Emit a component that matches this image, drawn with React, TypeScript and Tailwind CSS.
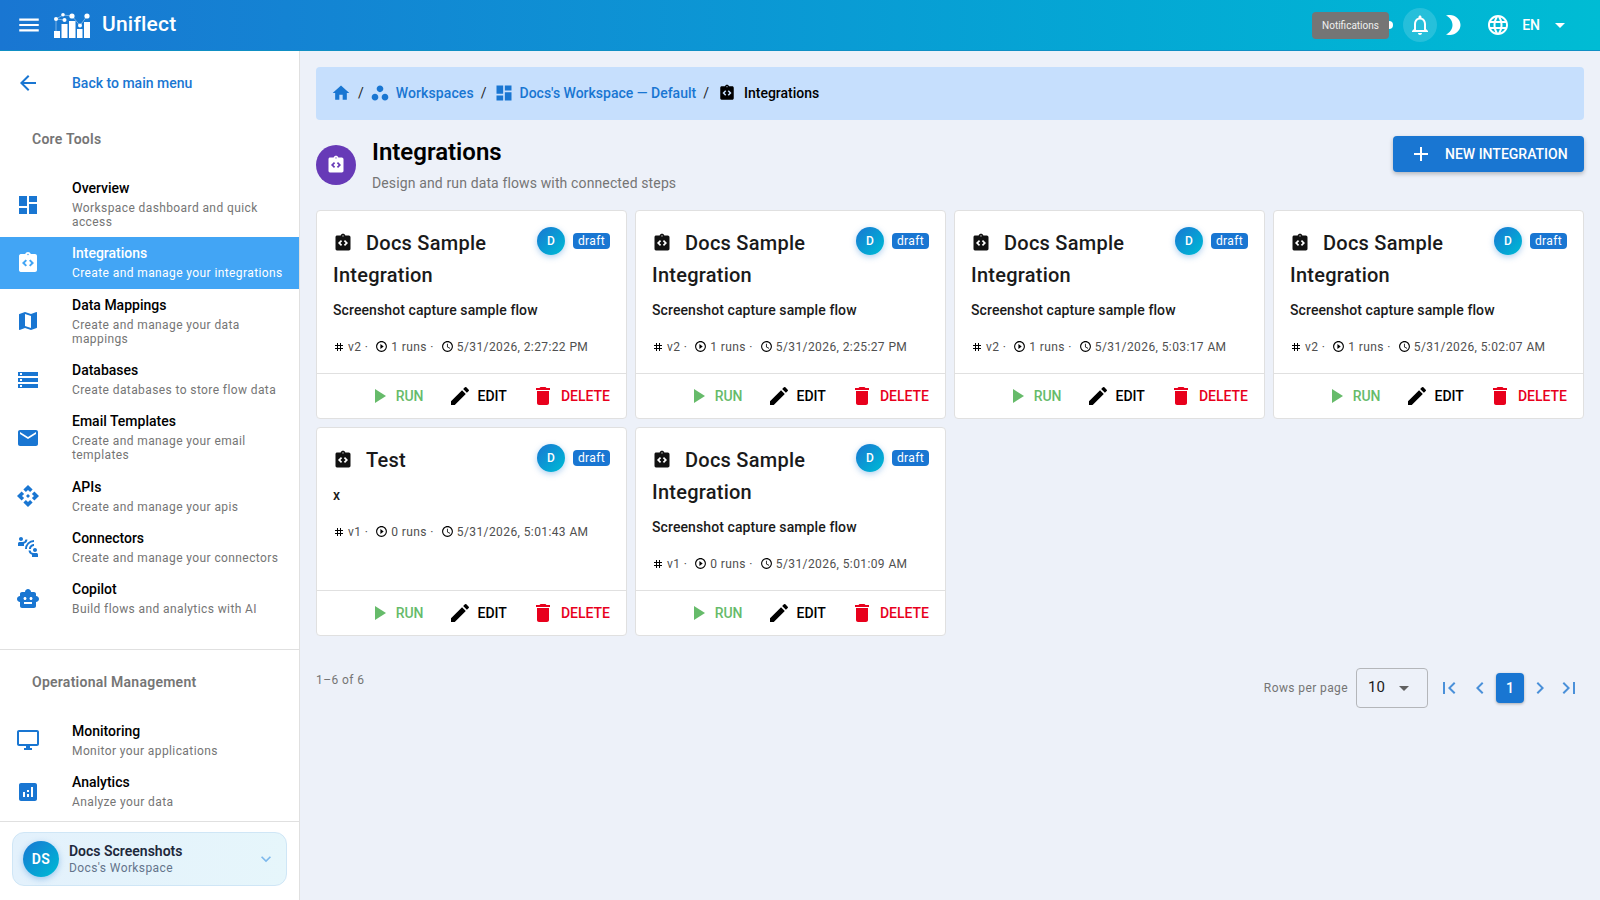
import type { ComponentType } from 'react';
import {
  MdAccessTime,
  MdAdd,
  MdAnalytics,
  MdApi,
  MdArrowBack,
  MdArrowDropDown,
  MdChevronLeft,
  MdChevronRight,
  MdConnectWithoutContact,
  MdDashboard,
  MdDelete,
  MdEdit,
  MdEmail,
  MdExpandMore,
  MdFirstPage,
  MdHome,
  MdIntegrationInstructions,
  MdLanguage,
  MdLastPage,
  MdMap,
  MdMenu,
  MdNotificationsNone,
  MdOutlineDesktopWindows,
  MdPlayArrow,
  MdPlayCircleOutline,
  MdSmartToy,
  MdStorage,
  MdTag,
  MdWorkspaces,
} from 'react-icons/md';

type IconType = ComponentType<{ size?: number; className?: string }>;

type NavItem = {
  icon: IconType;
  title: string;
  desc: string;
  active?: boolean;
};

type Integration = {
  title: string;
  desc: string;
  version: string;
  runs: number;
  date: string;
};

const coreTools: NavItem[] = [
  { icon: MdDashboard, title: 'Overview', desc: 'Workspace dashboard and quick access' },
  { icon: MdIntegrationInstructions, title: 'Integrations', desc: 'Create and manage your integrations', active: true },
  { icon: MdMap, title: 'Data Mappings', desc: 'Create and manage your data mappings' },
  { icon: MdStorage, title: 'Databases', desc: 'Create databases to store flow data' },
  { icon: MdEmail, title: 'Email Templates', desc: 'Create and manage your email templates' },
  { icon: MdApi, title: 'APIs', desc: 'Create and manage your apis' },
  { icon: MdConnectWithoutContact, title: 'Connectors', desc: 'Create and manage your connectors' },
  { icon: MdSmartToy, title: 'Copilot', desc: 'Build flows and analytics with AI' },
];

const operational: NavItem[] = [
  { icon: MdOutlineDesktopWindows, title: 'Monitoring', desc: 'Monitor your applications' },
  { icon: MdAnalytics, title: 'Analytics', desc: 'Analyze your data' },
];

const integrations: Integration[] = [
  { title: 'Docs Sample Integration', desc: 'Screenshot capture sample flow', version: 'v2', runs: 1, date: '5/31/2026, 2:27:22 PM' },
  { title: 'Docs Sample Integration', desc: 'Screenshot capture sample flow', version: 'v2', runs: 1, date: '5/31/2026, 2:25:27 PM' },
  { title: 'Docs Sample Integration', desc: 'Screenshot capture sample flow', version: 'v2', runs: 1, date: '5/31/2026, 5:03:17 AM' },
  { title: 'Docs Sample Integration', desc: 'Screenshot capture sample flow', version: 'v2', runs: 1, date: '5/31/2026, 5:02:07 AM' },
  { title: 'Test', desc: 'x', version: 'v1', runs: 0, date: '5/31/2026, 5:01:43 AM' },
  { title: 'Docs Sample Integration', desc: 'Screenshot capture sample flow', version: 'v1', runs: 0, date: '5/31/2026, 5:01:09 AM' },
];

function Logo() {
  return (
    <svg width="36" height="25" viewBox="0 0 36 25" fill="none">
      <g fill="#fff">
        <rect x="0" y="18" width="6" height="7" />
        <rect x="7.5" y="11" width="6" height="14" />
        <rect x="15" y="8" width="6.5" height="17" />
        <rect x="23" y="16" width="5.5" height="9" />
        <rect x="30" y="9" width="6" height="16" />
        <circle cx="2" cy="6" r="2" />
        <circle cx="10.5" cy="7" r="2" />
        <circle cx="18" cy="3" r="2.6" />
        <circle cx="9" cy="1.8" r="1.8" />
        <circle cx="26" cy="12.5" r="2" />
        <circle cx="33" cy="3" r="2.6" />
      </g>
      <path d="M2 6L9 2M2 6L10.5 7M2 6V18M9 2L18 3M26 12.5L18 3M26 12.5L33 3" stroke="#fff" strokeWidth="0.6" opacity="0.7" />
    </svg>
  );
}

function MoonIcon() {
  return (
    <svg width="24" height="24" viewBox="0 0 24 24" fill="#fff">
      <path d="M6 2.5C10 4.5 12.5 8 12.5 12C12.5 16 10 19.5 6 21.5C7.5 21.9 9 22 10 22C15.5 22 20.5 17.5 20.5 12C20.5 6.5 15.5 2 10 2C9 2 7.5 2.1 6 2.5Z" />
    </svg>
  );
}

function SidebarItem({ item }: { item: NavItem }) {
  const Icon = item.icon;
  return (
    <div className={`flex items-center px-4 pt-[6px] pb-[8px] ${item.active ? 'bg-[#42a5f5]' : ''}`}>
      <div className="w-[56px] shrink-0 pt-[2px]">
        <Icon size={24} className={item.active ? 'text-white' : 'text-[#1976d2]'} />
      </div>
      <div className="min-w-0">
        <div className={`text-sm leading-5 font-medium ${item.active ? 'text-white' : 'text-black'}`}>{item.title}</div>
        <div className={`mt-[3px] text-xs leading-[14.2px] tracking-[0.4px] ${item.active ? 'text-white' : 'text-[#757575]'}`}>
          {item.desc}
        </div>
      </div>
    </div>
  );
}

function Sidebar() {
  return (
    <aside className="flex w-[300px] shrink-0 flex-col border-r border-[#e0e0e0] bg-white">
      <div className="flex h-16 items-center px-4">
        <div className="w-[56px] shrink-0">
          <MdArrowBack size={24} className="text-[#1976d2]" />
        </div>
        <span className="text-sm font-medium text-[#1976d2]">Back to main menu</span>
      </div>
      <div className="mb-[9px] flex h-12 items-center px-8 text-sm font-semibold tracking-[0.25px] text-[#757575]">Core Tools</div>
      <div>
        {coreTools.map((item) => (
          <SidebarItem key={item.title} item={item} />
        ))}
      </div>
      <div className="mt-[25px] border-t border-[#e0e0e0]" />
      <div className="flex h-[64.5px] items-center pr-8 pb-[1.5px] pl-8 text-sm font-semibold tracking-[0.25px] text-[#757575]">Operational Management</div>
      <div>
        {operational.map((item) => (
          <SidebarItem key={item.title} item={item} />
        ))}
      </div>
      <div className="mt-[3.5px] flex-1 border-t border-[#e0e0e0] px-3 pt-[10px]">
        <div className="flex h-[54px] items-center rounded-xl border border-[#cfe6f6] bg-gradient-to-r from-[#e3f1fc] to-[#e6f6fb] pr-[10px] pl-[10px]">
          <div className="flex h-9 w-9 items-center justify-center rounded-full bg-gradient-to-br from-[#1976d2] to-[#00bcd4] text-sm font-semibold tracking-[0.4px] text-white shadow-[0_2px_6px_rgba(25,118,210,0.35)]">
            DS
          </div>
          <div className="ml-[10px] flex-1">
            <div className="text-sm leading-[18px] font-semibold text-[#1e293b]">Docs Screenshots</div>
            <div className="text-xs leading-4 tracking-[0.4px] text-[#64748b]">Docs's Workspace</div>
          </div>
          <MdExpandMore size={20} className="text-[#7db8ec]" />
        </div>
      </div>
    </aside>
  );
}

function TopBar() {
  return (
    <header className="relative flex h-[51px] shrink-0 items-center border-b border-[#0f8fc4] bg-gradient-to-r from-[#1976d2] to-[#00bcd4] pr-[28px] pl-4 text-white">
      <MdMenu size={26} />
      <div className="ml-[12px]">
        <Logo />
      </div>
      <span className="ml-[12px] text-[21px] font-medium tracking-[0.2px]">Uniflect</span>
      <div className="ml-auto flex items-center">
        <div className="mr-[10px] h-2 w-1 rounded-r-full bg-white" />
        <div className="flex h-[34px] w-[34px] items-center justify-center rounded-full bg-white/15">
          <MdNotificationsNone size={24} />
        </div>
        <div className="ml-[3px]">
          <MoonIcon />
        </div>
        <MdLanguage size={24} className="ml-[22px]" />
        <span className="ml-[12px] text-sm font-medium">EN</span>
        <MdArrowDropDown size={24} className="ml-[8px]" />
      </div>
      <div className="absolute top-[12px] left-[1312px] flex h-[27px] w-[77px] items-center justify-center rounded bg-[#757575] text-[10px] text-[#f0f0f0]">
        Notifications
      </div>
    </header>
  );
}

function Breadcrumbs() {
  return (
    <nav className="flex h-[53px] items-center rounded bg-[#c6dffd] pr-4 pb-[1px] pl-[15px] text-sm font-medium">
      <MdHome size={20} className="text-[#1976d2]" />
      <span className="mr-[6px] ml-[7px] font-normal text-[#1f1f1f]">/</span>
      <MdWorkspaces size={20} className="text-[#1976d2]" />
      <span className="ml-[6px] tracking-[0.1px] text-[#1976d2]">Workspaces</span>
      <span className="mx-[7px] font-normal text-[#1f1f1f]">/</span>
      <MdDashboard size={20} className="text-[#1976d2]" />
      <span className="ml-[6px] text-[#1976d2]">Docs's Workspace — Default</span>
      <span className="mr-[9px] ml-[7px] font-normal text-[#1f1f1f]">/</span>
      <MdIntegrationInstructions size={18} className="text-black" />
      <span className="ml-[8px] text-black">Integrations</span>
    </nav>
  );
}

function IntegrationCard({ item }: { item: Integration }) {
  return (
    <div className="flex h-[209px] flex-col rounded border border-[#e0e0e0] bg-white">
      <div className="flex-1 px-4 pt-4">
        <div className="flex items-start justify-between">
          <div className="w-[196px] text-xl leading-8 font-medium tracking-[0.25px] text-[#1a1a1a]">
            <MdIntegrationInstructions size={20} className="mr-[13px] -mt-[2px] inline-block text-[#111]" />
            {item.title}
          </div>
          <div className="flex items-center gap-2">
            <div className="flex h-7 w-7 items-center justify-center rounded-full bg-gradient-to-br from-[#1976d2] to-[#00bcd4] text-xs font-medium text-white shadow-[0_2px_6px_rgba(25,118,210,0.35)]">
              D
            </div>
            <span className="flex h-4 w-[37px] items-center justify-center rounded bg-[#1976d2] text-xs tracking-[0.4px] text-white">
              draft
            </span>
          </div>
        </div>
        <div className="mt-[9px] text-sm leading-5 font-medium tracking-[0.1px] text-[#1a1a1a]">{item.desc}</div>
        <div className="mt-[17px] flex items-center text-xs leading-5 tracking-[0.4px] text-[#4f4f4f]">
          <MdTag size={12} className="text-black" />
          <span className="ml-[3px]">{item.version} ·</span>
          <MdPlayCircleOutline size={13} className="ml-[7px] text-black" />
          <span className="ml-[3px]">{item.runs} runs ·</span>
          <MdAccessTime size={13} className="ml-[7px] text-black" />
          <span className="ml-[3px]">{item.date}</span>
        </div>
      </div>
      <div className="flex h-[45px] items-center justify-end border-t border-[#e0e0e0] pr-4 text-sm font-medium">
        <MdPlayArrow size={24} className="text-[#66bb6a]" />
        <span className="ml-[5px] text-[#66bb6a]">RUN</span>
        <MdEdit size={24} className="ml-[24px] text-black" />
        <span className="ml-[6px] text-black">EDIT</span>
        <MdDelete size={24} className="ml-[24px] text-[#e8001c]" />
        <span className="ml-[6px] text-[#e8001c]">DELETE</span>
      </div>
    </div>
  );
}

function Pagination() {
  return (
    <div className="mt-[32px] flex items-start justify-between pr-[3px]">
      <span className="mt-[4px] text-xs leading-4 tracking-[0.4px] text-[#757575]">1–6 of 6</span>
      <div className="flex items-center">
        <span className="text-xs tracking-[0.4px] text-[#757575]">Rows per page</span>
        <div className="ml-2 flex h-10 w-[72px] items-center justify-between rounded border border-[#b4b6ba] pr-[11px] pl-[11px] text-[15px] text-[#1a1a1a]">
          10
          <MdArrowDropDown size={24} className="text-[#616161]" />
        </div>
        <MdFirstPage size={24} className="ml-[9px] text-[#4a90d9]" />
        <MdChevronLeft size={24} className="ml-[7px] text-[#4a90d9]" />
        <div className="ml-[4px] flex h-[30px] w-7 items-center justify-center rounded bg-[#1976d2] text-sm font-medium text-white shadow-[0_1px_3px_rgba(0,0,0,0.3)]">
          1
        </div>
        <MdChevronRight size={24} className="ml-[4px] text-[#4a90d9]" />
        <MdLastPage size={24} className="ml-[5px] text-[#4a90d9]" />
      </div>
    </div>
  );
}

export default function App() {
  return (
    <div className="flex h-screen flex-col overflow-hidden bg-[#edf1f9] font-[Roboto,sans-serif]">
      <TopBar />
      <div className="flex min-h-0 flex-1">
        <Sidebar />
        <main className="min-w-0 flex-1 px-4 pt-4">
          <Breadcrumbs />
          <div className="mt-4 flex items-start justify-between">
            <div className="flex">
              <div className="mt-[9px] flex h-10 w-10 items-center justify-center rounded-full bg-[#673ab7]">
                <MdIntegrationInstructions size={20} className="text-white" />
              </div>
              <div className="ml-[16px]">
                <div className="text-2xl leading-8 font-semibold text-black">Integrations</div>
                <div className="mt-[5px] text-sm leading-5 tracking-[0.13px] text-[#757575]">Design and run data flows with connected steps</div>
              </div>
            </div>
            <button className="flex h-9 w-[191px] items-center rounded bg-[#1976d2] pl-4 text-sm font-medium text-white shadow-[0_2px_4px_rgba(0,0,0,0.25)]">
              <MdAdd size={24} />
              <span className="ml-[12px]">NEW INTEGRATION</span>
            </button>
          </div>
          <div className="mt-[16.5px] grid grid-cols-4 gap-2">
            {integrations.map((item, i) => (
              <IntegrationCard key={i} item={item} />
            ))}
          </div>
          <Pagination />
        </main>
      </div>
    </div>
  );
}
